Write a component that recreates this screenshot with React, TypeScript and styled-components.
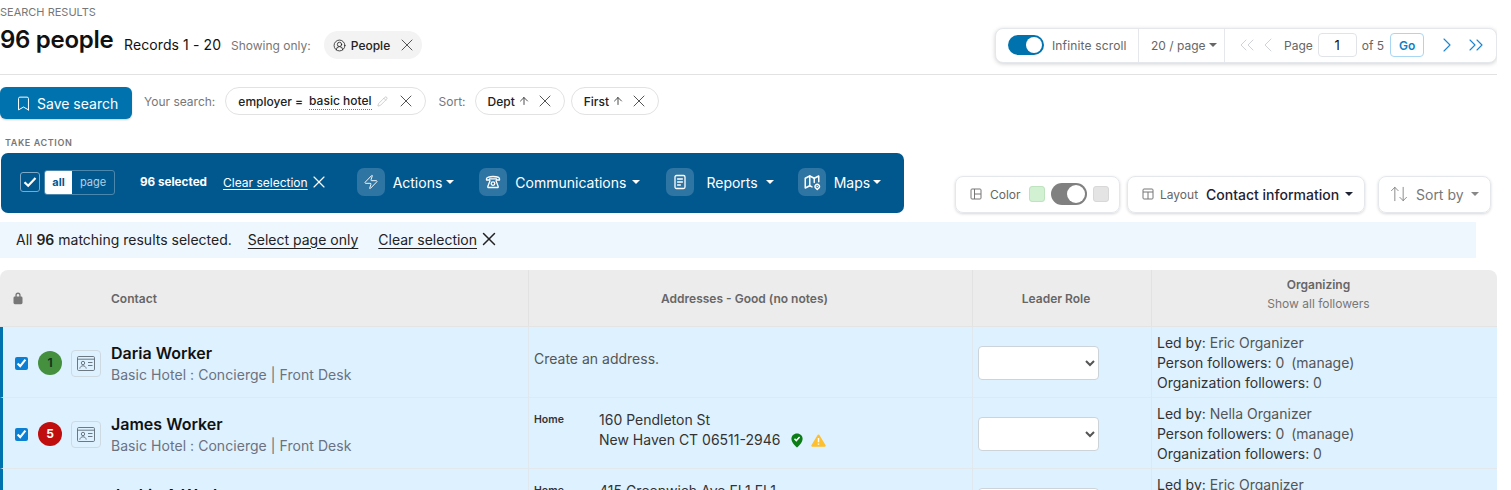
import styled, { createGlobalStyle } from 'styled-components'
import {
  ArrowUp,
  ArrowUpDown,
  Bookmark,
  ChevronLeft,
  ChevronRight,
  ChevronsLeft,
  ChevronsRight,
  CircleUserRound,
  Pencil,
  X,
  Zap,
} from 'lucide-react'
import { TbMap2 } from 'react-icons/tb'

const GlobalStyle = createGlobalStyle`
  html, body {
    margin: 0;
    height: 490px;
    overflow: hidden;
    background: #fff;
    font-family: Inter, "Noto Sans", sans-serif;
    color: #111;
  }
`

const Page = styled.div`
  width: 1497px;
  height: 490px;
  overflow: hidden;
  padding-top: 5px;
  box-sizing: border-box;
`

const Eyebrow = styled.div`
  font-size: 11px;
  line-height: 14px;
  color: #777;
  text-transform: uppercase;
`

const TitleRow = styled.div`
  display: flex;
  align-items: center;
  height: 44px;
  margin-top: 4px;
  padding-bottom: 7px;
  border-bottom: 1px solid #e2e2e2;
`

const Title = styled.h1`
  margin: 0 0 10px;
  font-size: 24px;
  line-height: 32px;
  font-weight: 600;
  letter-spacing: -0.3px;
  width: 124px;
  white-space: nowrap;
`

const Records = styled.span`
  font-size: 14px;
  width: 107px;
  margin-bottom: 2px;
  letter-spacing: 0.1px;
  white-space: nowrap;
`

const MutedLabel = styled.span`
  font-size: 12px;
  color: #777;
  white-space: nowrap;
`

const PeopleChip = styled.div`
  display: flex;
  align-items: center;
  height: 28px;
  margin-left: 13px;
  padding: 0 5px 0 9px;
  background: #f3f3f3;
  border-radius: 14px;
  font-size: 12px;
  font-weight: 500;
  gap: 5px;
  color: #222;

  svg:last-child {
    margin-left: 2px;
    color: #555;
  }
`

const Pager = styled.div`
  display: flex;
  align-items: stretch;
  height: 35px;
  margin-left: auto;
  background: #fff;
  border: 1px solid #e4e8ec;
  border-radius: 8px;
  box-sizing: border-box;
  box-shadow: 0 1px 4px rgba(0, 0, 0, 0.18);
  font-size: 12px;
  color: #666;
`

const PagerPart = styled.div<{ $width: number }>`
  display: flex;
  align-items: center;
  width: ${(p) => p.$width}px;
  box-sizing: border-box;
  padding-left: 12px;
  border-right: 1px solid #e4e8ec;

  &:last-child {
    border-right: none;
  }
`

const Toggle = styled.span<{ $on?: boolean }>`
  position: relative;
  display: block;
  flex: none;
  width: 36px;
  height: ${(p) => (p.$on ? 20 : 22)}px;
  border-radius: 11px;
  background: ${(p) => (p.$on ? '#0073ae' : '#808080')};

  &::after {
    content: '';
    position: absolute;
    top: 2px;
    right: 2px;
    width: ${(p) => (p.$on ? 16 : 18)}px;
    height: ${(p) => (p.$on ? 16 : 18)}px;
    border-radius: 50%;
    background: #fff;
  }
`

const ToggleLabel = styled.span`
  margin-left: 8px;
  letter-spacing: 0.15px;
  white-space: nowrap;
`

const Caret = styled.span<{ $color?: string; $gap?: number }>`
  display: inline-block;
  flex: none;
  margin-left: ${(p) => p.$gap ?? 3}px;
  width: 0;
  height: 0;
  border-left: 4px solid transparent;
  border-right: 4px solid transparent;
  border-top: 4px solid ${(p) => p.$color ?? 'currentColor'};
  vertical-align: middle;
`

const PageLabel = styled.span`
  margin-left: 4px;
`

const PageInput = styled.input`
  width: 39px;
  height: 24px;
  box-sizing: border-box;
  margin: 0 5px;
  border: 1px solid #e0e4e8;
  border-radius: 4px;
  text-align: center;
  font: 13px Inter, sans-serif;
  color: #111;
`

const GoButton = styled.span`
  display: flex;
  align-items: center;
  justify-content: center;
  width: 34px;
  height: 24px;
  box-sizing: border-box;
  margin-left: 6px;
  border: 1px solid #a9d6f2;
  border-radius: 4px;
  color: #0f7fc4;
  font-weight: 600;
  font-size: 12px;
`

const PagerIcon = styled.span<{ $active?: boolean; $left?: number }>`
  display: flex;
  margin-left: ${(p) => p.$left ?? 0}px;
  color: ${(p) => (p.$active ? '#1b86cf' : '#cfd3d7')};
`

const SearchRow = styled.div`
  display: flex;
  align-items: center;
  height: 32px;
  margin-top: 12px;
`

const SaveButton = styled.button`
  display: flex;
  align-items: center;
  gap: 5px;
  width: 132px;
  height: 32px;
  padding: 0 0 0 15px;
  border: none;
  border-radius: 6px;
  background: #0073ae;
  color: #fff;
  font: 14px Inter, sans-serif;
  box-shadow: 0 1px 2px rgba(0, 0, 0, 0.2);
`

const Chip = styled.div<{ $left: number }>`
  display: flex;
  align-items: center;
  height: 28px;
  margin: -4px 0 0 ${(p) => p.$left}px;
  padding: 0 9px 0 12px;
  border: 1px solid #e2e2e2;
  border-radius: 14px;
  box-sizing: border-box;
  font-size: 12px;
  font-weight: 500;
  white-space: nowrap;
  color: #222;
`

const ChipLabel = styled(MutedLabel)<{ $left: number }>`
  margin: -4px 0 0 ${(p) => p.$left}px;
`

const ChipValue = styled.span`
  margin-left: 6px;
  border-bottom: 1px dotted #777;
  line-height: 16px;
`

const ChipClose = styled.span<{ $left: number }>`
  display: flex;
  margin-left: ${(p) => p.$left}px;
  color: #555;
`

const ChipEdit = styled(ChipClose)`
  color: #aaa;
`

const ChipArrow = styled(ArrowUp)`
  margin-left: 3px;
`

const SectionLabel = styled.div`
  margin: 18px 0 0 5px;
  font-size: 9px;
  line-height: 12px;
  font-weight: 600;
  letter-spacing: 0.6px;
  color: #777;
  text-transform: uppercase;
`

const ActionRow = styled.div`
  display: flex;
  align-items: flex-end;
  margin-top: 4px;
`

const ActionBar = styled.div`
  display: flex;
  align-items: center;
  width: 903px;
  height: 60px;
  margin-left: 1px;
  padding: 0 0 2px 19px;
  box-sizing: border-box;
  background: #01588f;
  border-radius: 7px;
  color: #fff;
  font-size: 14px;
`

const CheckBox = styled.span`
  display: flex;
  align-items: center;
  justify-content: center;
  width: 20px;
  height: 20px;
  box-sizing: border-box;
  border: 1px solid #7fa9c6;
  border-radius: 3px;
`

const Segment = styled.div`
  display: flex;
  height: 25px;
  margin-left: 4px;
  border: 1px solid #4c87ad;
  border-radius: 3px;
  box-sizing: border-box;
  font-size: 11px;
  line-height: 23px;
`

const SegmentItem = styled.span<{ $on?: boolean }>`
  width: ${(p) => (p.$on ? 27 : 42)}px;
  text-align: center;
  background: ${(p) => (p.$on ? '#fff' : 'transparent')};
  color: ${(p) => (p.$on ? '#01588f' : '#b5cfe0')};
  font-weight: ${(p) => (p.$on ? 700 : 400)};
  border-radius: 2px 0 0 2px;
`

const SelectedCount = styled.span`
  margin-left: 25px;
  font-size: 11.7px;
  font-weight: 700;
  width: 83px;
  white-space: nowrap;
`

const ClearLink = styled.span`
  font-size: 12px;
  text-decoration: underline;
  text-underline-offset: 2px;
  white-space: nowrap;
`

const ClearIcon = styled.span`
  display: flex;
  margin: 0 28px 0 1px;
`

const ActionMenu = styled.div<{ $labelGap: number; $trailing: number }>`
  display: flex;
  align-items: center;
  margin-right: ${(p) => p.$trailing}px;
  white-space: nowrap;

  & > span:nth-child(2) {
    margin-left: ${(p) => p.$labelGap}px;
  }
`

const IconTile = styled.span`
  display: flex;
  align-items: center;
  justify-content: center;
  width: 28px;
  height: 28px;
  border-radius: 7px;
  background: #2f75a3;
`

const Controls = styled.div`
  display: flex;
  margin-left: 51px;
`

const ControlBox = styled.div<{ $width: number; $left: number }>`
  display: flex;
  align-items: center;
  width: ${(p) => p.$width}px;
  height: 37px;
  margin-left: ${(p) => p.$left}px;
  box-sizing: border-box;
  padding: 0 0 1px 14px;
  border: 1px solid #e4e8ec;
  border-radius: 8px;
  box-shadow: 0 1px 3px rgba(0, 0, 0, 0.16);
  font-size: 12px;
  color: #666;
`

const ControlLabel = styled.span<{ $left: number }>`
  margin-left: ${(p) => p.$left}px;
`

const Swatch = styled.span<{ $bg: string; $edge: string; $left?: number }>`
  width: 16px;
  height: 16px;
  margin: 0 6px 0 ${(p) => p.$left ?? 6}px;
  box-sizing: border-box;
  border-radius: 3px;
  background: ${(p) => p.$bg};
  border: 1px solid ${(p) => p.$edge};
`

const LayoutValue = styled.span`
  margin-left: 8px;
  font-size: 14px;
  font-weight: 500;
  color: #1d2333;
  white-space: nowrap;
`

const SortIcon = styled(ArrowUpDown)`
  margin-left: -4px;
  color: #777;
`

const SortLabel = styled.span`
  margin-left: 7px;
  font-size: 14px;
  color: #777;
`

const Notice = styled.div`
  display: flex;
  align-items: center;
  width: 1476px;
  height: 36px;
  margin-top: 9px;
  padding: 0 0 2px 16px;
  box-sizing: border-box;
  background: #eff7fe;
  font-size: 14px;
  color: #222;
  white-space: nowrap;

  strong {
    font-weight: 600;
  }
`

const NoticeLink = styled.span<{ $left: number }>`
  margin-left: ${(p) => p.$left}px;
  text-decoration: underline;
  text-underline-offset: 3px;
`

const NoticeClose = styled(X)`
  margin-left: 1px;
`

const ResultsTable = styled.table`
  width: 1497px;
  margin-top: 12px;
  table-layout: fixed;
  border-collapse: separate;
  border-spacing: 0;
`

const Col = styled.col<{ $width: number }>`
  width: ${(p) => p.$width}px;
`

const HeadCell = styled.th<{ $left?: boolean }>`
  height: 57px;
  padding: 0 ${(p) => (p.$left ? 0 : 12)}px 0 0;
  background: #ececec;
  border-right: 1px solid #e2e2e2;
  border-bottom: 1px solid #e4e4e4;
  box-sizing: border-box;
  font-size: 12px;
  font-weight: 600;
  color: #666;
  text-align: ${(p) => (p.$left ? 'left' : 'center')};
  vertical-align: middle;

  &:first-child {
    border-top-left-radius: 8px;
  }

  &:last-child {
    border-right: none;
    border-top-right-radius: 8px;
  }
`

const HeadInner = styled.div`
  display: flex;
  align-items: center;
  padding-left: 12px;
`

const ContactHead = styled.span`
  margin-left: 87px;
`

const FollowersLink = styled.div`
  margin: 4px 0 9px;
  font-weight: 400;
  color: #777;
`

const Cell = styled.td`
  height: 71px;
  padding: 0 0 0 5px;
  box-sizing: border-box;
  background: #def1ff;
  border-right: 1px solid #e0e8ee;
  border-bottom: 1px solid #e3e8ec;
  font-size: 14px;
  line-height: 20px;
  color: #444;
  vertical-align: top;

  &:last-child {
    border-right: none;
  }
`

const ContactCell = styled(Cell)`
  padding-left: 0;
  border-left: 3px solid #0073ae;
`

const ContactWrap = styled.div`
  display: flex;
  align-items: center;
  height: 70px;
  padding: 2px 0 0 12px;
  box-sizing: border-box;
`

const RowCheck = styled.input`
  width: 13px;
  height: 13px;
  margin: 0;
  accent-color: #0a7fd4;
`

const ScoreBadge = styled.span<{ $bg: string; $fg: string }>`
  display: flex;
  align-items: center;
  justify-content: center;
  width: 24px;
  height: 24px;
  margin-left: 10px;
  border-radius: 50%;
  background: ${(p) => p.$bg};
  color: ${(p) => p.$fg};
  font-size: 12px;
  font-weight: 700;
`

const CardButton = styled.span`
  display: flex;
  align-items: center;
  justify-content: center;
  width: 30px;
  height: 27px;
  margin-left: 9px;
  box-sizing: border-box;
  border: 1px solid #cfd9e2;
  border-radius: 4px;
  color: #5f6b75;
`

const ContactText = styled.div`
  margin-left: 10px;
  padding-top: 2px;
`

const ContactName = styled.div`
  font-size: 16px;
  line-height: 22px;
  font-weight: 600;
  color: #111;
`

const ContactOrg = styled.div`
  font-size: 14px;
  line-height: 22px;
  letter-spacing: 0.05px;
  color: #6b7280;
  white-space: nowrap;
`

const EmptyAddress = styled.div`
  margin-top: 22px;
  color: #555;
`

const AddressWrap = styled.div`
  display: flex;
  padding-top: 12px;
`

const AddressType = styled.span`
  width: 65px;
  font-size: 10.5px;
  font-weight: 600;
  color: #333;
`

const AddressLine = styled.div`
  display: flex;
  align-items: center;
  color: #333;
  white-space: nowrap;
`

const StatusIcon = styled.span<{ $left: number }>`
  display: flex;
  margin-left: ${(p) => p.$left}px;
`

const RoleWrap = styled.div`
  display: flex;
  align-items: center;
  height: 70px;
  padding-top: 2px;
  box-sizing: border-box;
`

const RoleSelect = styled.select`
  width: 121px;
  height: 34px;
  border: 1px solid #ccd3d9;
  border-radius: 4px;
  background-color: #fff;
  color: #555;
`

const OrganizingWrap = styled.div`
  padding-top: 6px;
  color: #333;
`

const Value = styled.span`
  color: #555;
`

const ManageLink = styled.span`
  margin-left: 7px;
  color: #555;
`

const PhoneIcon = () => (
  <svg width="16" height="16" viewBox="0 0 16 16" fill="none" stroke="#fff" strokeWidth="1.3" strokeLinejoin="round">
    <path d="M1.5 6V4.8C1.5 3.4 4.5 2.5 8 2.5s6.5.9 6.5 2.3V6h-3V4.8h-7V6z" />
    <path d="M5.2 6.2 2.8 12.6c-.1.5.2.9.7.9h9c.5 0 .8-.4.7-.9l-2.4-6.4" />
    <circle cx="8" cy="9.6" r="1.8" />
  </svg>
)

const ReportIcon = () => (
  <svg width="16" height="16" viewBox="0 0 16 16" fill="none" stroke="#fff" strokeWidth="1.3" strokeLinecap="round">
    <rect x="3" y="1.5" width="10" height="13" rx="1.5" />
    <path d="M5.6 5h4.8M5.6 8h4.8M5.6 11h2.8" />
  </svg>
)

const PanelIcon = () => (
  <svg width="12" height="12" viewBox="0 0 12 12" fill="none" stroke="#777" strokeWidth="1">
    <rect x="1" y="1" width="10" height="10" rx="1" />
    <path d="M4.5 1v10M4.5 6H11" />
  </svg>
)

const LayoutIcon = () => (
  <svg width="12" height="12" viewBox="0 0 12 12" fill="none" stroke="#777" strokeWidth="1">
    <rect x="1" y="1" width="10" height="10" rx="1" />
    <path d="M1 4h10M6 4v7" />
  </svg>
)

const CardIcon = () => (
  <svg width="18" height="15" viewBox="0 0 18 15" fill="none" stroke="currentColor" strokeWidth="0.9">
    <rect x="0.5" y="0.5" width="17" height="14" rx="1.2" />
    <path d="M0.5 3.2h17M11 6.5h4.5M11 9.5h4.5" />
    <circle cx="6" cy="7" r="1.7" />
    <path d="M2.8 12.6c.3-1.9 1.6-2.8 3.2-2.8s2.9.9 3.2 2.8" />
  </svg>
)

const LockIcon = () => (
  <svg width="12" height="14" viewBox="0 0 12 14" fill="#777">
    <path d="M3.4 6V4.2a2.6 2.6 0 0 1 5.2 0V6h-1.3V4.2a1.3 1.3 0 0 0-2.6 0V6z" />
    <rect x="1.5" y="5.6" width="9" height="7.6" rx="1.4" />
  </svg>
)

const VerifiedPin = () => (
  <svg width="12" height="15" viewBox="0 0 12 15">
    <path d="M6 .4c3.2 0 5.6 2.3 5.6 5.3 0 3.4-3.3 6.700-5.600 8.900C3.700 12.400.4 9.100.4 5.700.4 2.700 2.800.4 6 .4z" fill="#0a7d16" />
    <path d="M3.500 5.800 5.300 7.600 8.600 4.100" fill="none" stroke="#fff" strokeWidth="1.500" />
  </svg>
)

const WarningIcon = () => (
  <svg width="15" height="13" viewBox="0 0 15 13">
    <path d="M7.500.4c.4 0 .7.2.9.5l6.200 10.300c.4.700-.1 1.500-.9 1.500H1.300c-.8 0-1.300-.8-.9-1.500L6.600.9c.2-.3.5-.5.9-.5z" fill="#fdbf2d" />
    <path d="M7.500 4v4.300M7.500 9.500v1.300" stroke="#fff" strokeWidth="1.500" />
  </svg>
)

const rows = [
  {
    name: 'Daria Worker',
    score: '1',
    badge: '#44903f',
    badgeText: '#12331a',
    leader: 'Eric Organizer',
    address: null,
  },
  {
    name: 'James Worker',
    score: '5',
    badge: '#c00d0d',
    badgeText: '#fff',
    leader: 'Nella Organizer',
    address: { first: '160 Pendleton St', second: 'New Haven CT 06511-2946', icons: true },
  },
  {
    name: 'Jackie A Worker',
    score: '3',
    badge: '#e0a526',
    badgeText: '#222',
    leader: 'Eric Organizer',
    address: { first: '415 Greenwich Ave FL1 FL1', second: 'New Haven CT 06519-1706', icons: false },
  },
]

const App = () => {
  return (
    <>
      <GlobalStyle />
      <Page>
        <Eyebrow>Search results</Eyebrow>
        <TitleRow>
          <Title>96 people</Title>
          <Records>Records 1 - 20</Records>
          <MutedLabel>Showing only:</MutedLabel>
          <PeopleChip>
            <CircleUserRound size={13} strokeWidth={1.5} />
            People
            <X size={20} strokeWidth={1.2} />
          </PeopleChip>
          <Pager>
            <PagerPart $width={143}>
              <Toggle $on />
              <ToggleLabel>Infinite scroll</ToggleLabel>
            </PagerPart>
            <PagerPart $width={86}>
              20 / page
              <Caret />
            </PagerPart>
            <PagerPart $width={271}>
              <PagerIcon $left={-2}><ChevronsLeft size={24} strokeWidth={1} /></PagerIcon>
              <PagerIcon $left={-3}><ChevronLeft size={24} strokeWidth={1} /></PagerIcon>
              <PageLabel>Page</PageLabel>
              <PageInput defaultValue="1" />
              of 5
              <GoButton>Go</GoButton>
              <PagerIcon $active $left={11}><ChevronRight size={24} strokeWidth={1.1} /></PagerIcon>
              <PagerIcon $active $left={5}><ChevronsRight size={24} strokeWidth={1.1} /></PagerIcon>
            </PagerPart>
          </Pager>
        </TitleRow>

        <SearchRow>
          <SaveButton>
            <Bookmark size={17} strokeWidth={1.4} />
            Save search
          </SaveButton>
          <ChipLabel $left={12}>Your search:</ChipLabel>
          <Chip $left={10}>
            employer =
            <ChipValue>basic hotel</ChipValue>
            <ChipEdit $left={5}><Pencil size={11} strokeWidth={1.2} /></ChipEdit>
            <ChipClose $left={8}><X size={20} strokeWidth={1.2} /></ChipClose>
          </Chip>
          <ChipLabel $left={13}>Sort:</ChipLabel>
          <Chip $left={9}>
            Dept
            <ChipArrow size={12} strokeWidth={1.6} />
            <ChipClose $left={5}><X size={20} strokeWidth={1.2} /></ChipClose>
          </Chip>
          <Chip $left={6}>
            First
            <ChipArrow size={12} strokeWidth={1.6} />
            <ChipClose $left={5}><X size={20} strokeWidth={1.2} /></ChipClose>
          </Chip>
        </SearchRow>

        <SectionLabel>Take action</SectionLabel>
        <ActionRow>
          <ActionBar>
            <CheckBox>
              <svg width="14" height="12" viewBox="0 0 14 12" fill="none" stroke="#fff" strokeWidth="2.2">
                <path d="M1.500 6.200 5.200 9.800 12.500 2" />
              </svg>
            </CheckBox>
            <Segment>
              <SegmentItem $on>all</SegmentItem>
              <SegmentItem>page</SegmentItem>
            </Segment>
            <SelectedCount>96 selected</SelectedCount>
            <ClearLink>Clear selection</ClearLink>
            <ClearIcon><X size={20} strokeWidth={1.4} /></ClearIcon>
            <ActionMenu $labelGap={8} $trailing={25}>
              <IconTile><Zap size={16} strokeWidth={1.4} /></IconTile>
              <span>Actions</span>
              <Caret $gap={4} />
            </ActionMenu>
            <ActionMenu $labelGap={8} $trailing={26}>
              <IconTile><PhoneIcon /></IconTile>
              <span>Communications</span>
              <Caret $gap={6} />
            </ActionMenu>
            <ActionMenu $labelGap={12} $trailing={24}>
              <IconTile><ReportIcon /></IconTile>
              <span>Reports</span>
              <Caret $gap={8} />
            </ActionMenu>
            <ActionMenu $labelGap={8} $trailing={0}>
              <IconTile><TbMap2 size={18} /></IconTile>
              <span>Maps</span>
              <Caret $gap={3} />
            </ActionMenu>
          </ActionBar>
          <Controls>
            <ControlBox $width={165} $left={0}>
              <PanelIcon />
              <ControlLabel $left={8}>Color</ControlLabel>
              <Swatch $bg="#d2f0d2" $edge="#bfe3bf" $left={8} />
              <Toggle />
              <Swatch $bg="#e4e4e4" $edge="#d8d8d8" />
            </ControlBox>
            <ControlBox $width={238} $left={7}>
              <LayoutIcon />
              <ControlLabel $left={6}>Layout</ControlLabel>
              <LayoutValue>Contact information</LayoutValue>
              <Caret $gap={6} $color="#1d2333" />
            </ControlBox>
            <ControlBox $width={113} $left={13}>
              <SortIcon size={20} strokeWidth={1} />
              <SortLabel>Sort by</SortLabel>
              <Caret $gap={7} $color="#888" />
            </ControlBox>
          </Controls>
        </ActionRow>

        <Notice>
          All&nbsp;<strong>96</strong>&nbsp;matching results selected.
          <NoticeLink $left={16}>Select page only</NoticeLink>
          <NoticeLink $left={20}>Clear selection</NoticeLink>
          <NoticeClose size={22} strokeWidth={1.6} />
        </Notice>

        <ResultsTable>
          <colgroup>
            <Col $width={529} />
            <Col $width={444} />
            <Col $width={179} />
            <Col $width={345} />
          </colgroup>
          <thead>
            <tr>
              <HeadCell $left>
                <HeadInner>
                  <LockIcon />
                  <ContactHead>Contact</ContactHead>
                </HeadInner>
              </HeadCell>
              <HeadCell>Addresses - Good (no notes)</HeadCell>
              <HeadCell>Leader Role</HeadCell>
              <HeadCell>
                Organizing
                <FollowersLink>Show all followers</FollowersLink>
              </HeadCell>
            </tr>
          </thead>
          <tbody>
            {rows.map((row) => (
              <tr key={row.name}>
                <ContactCell>
                  <ContactWrap>
                    <RowCheck type="checkbox" defaultChecked />
                    <ScoreBadge $bg={row.badge} $fg={row.badgeText}>{row.score}</ScoreBadge>
                    <CardButton><CardIcon /></CardButton>
                    <ContactText>
                      <ContactName>{row.name}</ContactName>
                      <ContactOrg>Basic Hotel : Concierge | Front Desk</ContactOrg>
                    </ContactText>
                  </ContactWrap>
                </ContactCell>
                <Cell>
                  {row.address ? (
                    <AddressWrap>
                      <AddressType>Home</AddressType>
                      <div>
                        <AddressLine>{row.address.first}</AddressLine>
                        <AddressLine>
                          {row.address.second}
                          {row.address.icons && (
                            <>
                              <StatusIcon $left={11}><VerifiedPin /></StatusIcon>
                              <StatusIcon $left={8}><WarningIcon /></StatusIcon>
                            </>
                          )}
                        </AddressLine>
                      </div>
                    </AddressWrap>
                  ) : (
                    <EmptyAddress>Create an address.</EmptyAddress>
                  )}
                </Cell>
                <Cell>
                  <RoleWrap>
                    <RoleSelect defaultValue="">
                      <option value=""></option>
                      <option value="leader">Leader</option>
                    </RoleSelect>
                  </RoleWrap>
                </Cell>
                <Cell>
                  <OrganizingWrap>
                    <div>Led by: <Value>{row.leader}</Value></div>
                    <div>Person followers: <Value>0</Value><ManageLink>(manage)</ManageLink></div>
                    <div>Organization followers: <Value>0</Value></div>
                  </OrganizingWrap>
                </Cell>
              </tr>
            ))}
          </tbody>
        </ResultsTable>
      </Page>
    </>
  )
}

export default App
